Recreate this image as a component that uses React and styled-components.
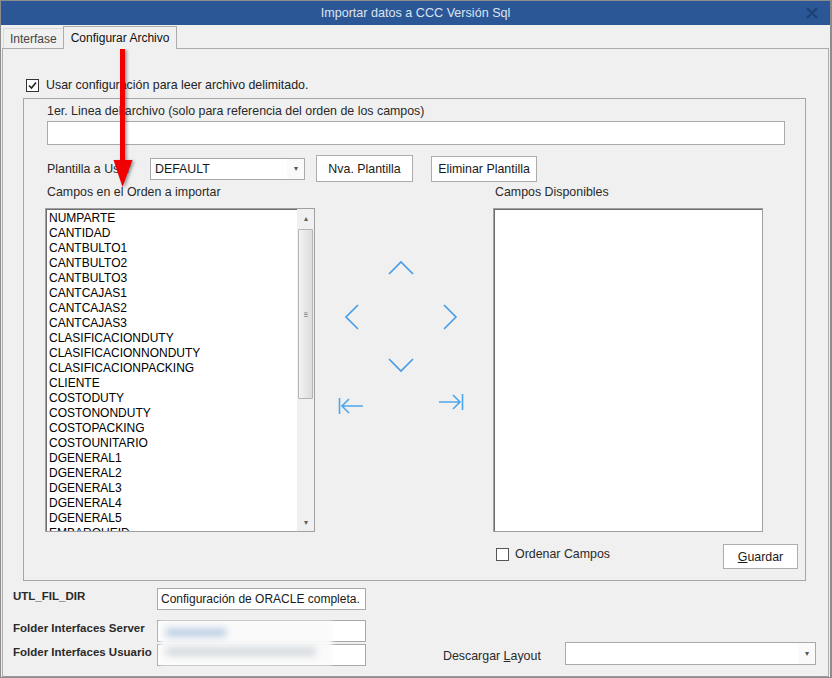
import React from 'react'
import styled, { createGlobalStyle } from 'styled-components'

const GlobalStyle = createGlobalStyle`
  body {
    margin: 0;
    font-family: "Liberation Sans", Arial, sans-serif;
    font-size: 12.4px;
    color: #1e1e1e;
    background: #f0f0f0;
  }
  * { box-sizing: border-box; }
`

const campos = [
  'NUMPARTE', 'CANTIDAD', 'CANTBULTO1', 'CANTBULTO2', 'CANTBULTO3', 'CANTCAJAS1',
  'CANTCAJAS2', 'CANTCAJAS3', 'CLASIFICACIONDUTY', 'CLASIFICACIONNONDUTY',
  'CLASIFICACIONPACKING', 'CLIENTE', 'COSTODUTY', 'COSTONONDUTY', 'COSTOPACKING',
  'COSTOUNITARIO', 'DGENERAL1', 'DGENERAL2', 'DGENERAL3', 'DGENERAL4', 'DGENERAL5',
  'EMBARQUEID'
]

function App() {
  return (
    <>
      <GlobalStyle />
      <Window>
        <TitleBar>
          <span />
          <TitleText>Importar datos a CCC Versión Sql</TitleText>
          <CloseBtn>
            <svg width="12" height="12" viewBox="0 0 12 12">
              <path d="M1 1 L11 11 M11 1 L1 11" stroke="#1d4274" strokeWidth="2.2" />
            </svg>
          </CloseBtn>
        </TitleBar>

        <TabStrip>
          <Tab>Interfase</Tab>
          <Tab $active>Configurar Archivo</Tab>
        </TabStrip>

        <Panel>
          <CheckRow>
            <CheckBox $checked>
              <svg width="11" height="11" viewBox="0 0 11 11">
                <path d="M2 5.5 L4.5 8 L9 2.5" stroke="#222" strokeWidth="1.6" fill="none" />
              </svg>
            </CheckBox>
            <span>Usar configuración para leer archivo delimitado.</span>
          </CheckRow>

          <GroupBox>
            <FieldLabel>1er. Linea del archivo (solo para referencia del orden de los campos)</FieldLabel>
            <TextInput $width={738} $height={24} $top={3} $left={2} />

            <TemplateRow>
              <RowLabel>Plantilla a Usar</RowLabel>
              <Select $width={155} $height={22}>
                <span>DEFAULT</span>
                <SelectArrow>▾</SelectArrow>
              </Select>
              <Button $width={97} $height={27} $gap={11}>Nva. Plantilla</Button>
              <Button $width={106} $height={26} $gap={18}>Eliminar Plantilla</Button>
            </TemplateRow>

            <Columns>
              <FieldLabel>Campos en el Orden a importar</FieldLabel>
              <span />
              <FieldLabel>Campos Disponibles</FieldLabel>
            </Columns>

            <ListsArea>
              <ListBox>
                <ListItems>
                  {campos.map((c) => <ListItem key={c}>{c}</ListItem>)}
                </ListItems>
                <ScrollBar>
                  <ScrollBtn>▴</ScrollBtn>
                  <Thumb><Grip>≡</Grip></Thumb>
                  <ScrollSpace />
                  <ScrollBtn>▾</ScrollBtn>
                </ScrollBar>
              </ListBox>

              <ArrowPad>
                <PadCell $col={2} $row={1}>
                  <svg width="26" height="15" viewBox="0 0 26 15">
                    <path d="M1 14 L13 2 L25 14" stroke="#4a9de4" strokeWidth="1.7" fill="none" />
                  </svg>
                </PadCell>
                <PadCell $col={1} $row={2}>
                  <svg width="16" height="26" viewBox="0 0 16 26">
                    <path d="M15 1 L3 13 L15 25" stroke="#4a9de4" strokeWidth="1.7" fill="none" />
                  </svg>
                </PadCell>
                <PadCell $col={3} $row={2}>
                  <svg width="16" height="26" viewBox="0 0 16 26">
                    <path d="M1 1 L13 13 L1 25" stroke="#4a9de4" strokeWidth="1.7" fill="none" />
                  </svg>
                </PadCell>
                <PadCell $col={2} $row={3}>
                  <svg width="26" height="15" viewBox="0 0 26 15">
                    <path d="M1 1 L13 13 L25 1" stroke="#4a9de4" strokeWidth="1.7" fill="none" />
                  </svg>
                </PadCell>
                <PadCell $col={1} $row={4}>
                  <svg width="26" height="18" viewBox="0 0 26 18">
                    <path d="M1.5 1 L1.5 17 M4 9 L25 9 M11 2 L4 9 L11 16" stroke="#4fa6ea" strokeWidth="1.6" fill="none" />
                  </svg>
                </PadCell>
                <PadCell $col={3} $row={4} $lift={4}>
                  <svg width="26" height="18" viewBox="0 0 26 18">
                    <path d="M24.5 1 L24.5 17 M1 9 L22 9 M15 2 L22 9 L15 16" stroke="#4fa6ea" strokeWidth="1.6" fill="none" />
                  </svg>
                </PadCell>
              </ArrowPad>

              <ListBox />
            </ListsArea>

            <GroupFooter>
              <CheckLabel>
                <CheckBox />
                <span>Ordenar Campos</span>
              </CheckLabel>
              <Button $width={75} $height={25}><u>G</u>uardar</Button>
            </GroupFooter>
          </GroupBox>

          <BottomArea>
            <PathGrid>
              <BoldLabel>UTL_FIL_DIR</BoldLabel>
              <TextInput $width={209} $height={22}>Configuración de ORACLE completa.</TextInput>
              <BoldLabel $top={10}>Folder Interfaces Server</BoldLabel>
              <TextInput $width={209} $height={22} $top={10} />
              <BoldLabel $top={2}>Folder Interfaces Usuario</BoldLabel>
              <TextInput $width={209} $height={22} $top={2} />
              <BlurPatch>
                <BlurLine $w={60} $c="#8fb0d4" />
                <BlurLine $w={150} $c="#b9c3cc" />
              </BlurPatch>
            </PathGrid>

            <LayoutPicker>
              <PickerLabel>Descargar <u>L</u>ayout</PickerLabel>
              <Select $width={251} $height={23}>
                <span />
                <SelectArrow>▾</SelectArrow>
              </Select>
            </LayoutPicker>
          </BottomArea>

          <RedArrow>
            <svg width="22" height="140" viewBox="0 0 22 140">
              <rect x="8" y="0" width="5" height="116" fill="#f00000" />
              <path d="M1.5 111 L20.5 111 L10.5 138 Z" fill="#f00000" />
            </svg>
          </RedArrow>
        </Panel>
      </Window>
    </>
  )
}

const Window = styled.div`
  width: 832px;
  height: 678px;
  display: flex;
  flex-direction: column;
  background: #f0f0f0;
  border: 1px solid #8c8c8c;
  border-right-width: 2px;
  border-bottom-width: 1px;
`

const TitleBar = styled.div`
  height: 24px;
  flex: none;
  display: grid;
  grid-template-columns: 1fr auto 1fr;
  align-items: center;
  background: #2b5797;
`

const TitleText = styled.div`
  color: #dbe4f0;
  font-size: 12.6px;
`

const CloseBtn = styled.div`
  justify-self: end;
  width: 30px;
  display: flex;
  justify-content: center;
  padding-right: 6px;
`

const TabStrip = styled.div`
  height: 23px;
  flex: none;
  display: flex;
  align-items: flex-end;
  padding-left: 2px;
  font-size: 12px;
`

const Tab = styled.div`
  height: ${(p) => (p.$active ? '23px' : '20px')};
  margin-bottom: ${(p) => (p.$active ? '-1px' : '0')};
  padding: 0 ${(p) => (p.$active ? '7px' : '6px')};
  display: flex;
  align-items: center;
  color: ${(p) => (p.$active ? '#111' : '#444')};
  background: #f0f0f0;
  border: 1px solid ${(p) => (p.$active ? '#acacac' : '#d9d9d9')};
  border-bottom: ${(p) => (p.$active ? 'none' : '0')};
  border-right: ${(p) => (p.$active ? '1px solid #acacac' : 'none')};
  position: relative;
  z-index: 1;
`

const Panel = styled.div`
  flex: 1;
  position: relative;
  margin: 0 1px;
  border: 1px solid #acacac;
  border-bottom: 1px solid #9a9a9a;
  padding-left: 10px;
`

const CheckRow = styled.label`
  display: flex;
  align-items: center;
  gap: 7px;
  margin-top: 29px;
  margin-left: 13px;
  height: 14px;
  color: #222;
`

const CheckBox = styled.span`
  width: 13px;
  height: 13px;
  flex: none;
  display: flex;
  align-items: center;
  justify-content: center;
  background: #fff;
  border: 1px solid ${(p) => (p.$checked ? '#333' : '#555')};
`

const GroupBox = styled.div`
  margin-top: 6px;
  margin-left: 10px;
  width: 783px;
  height: 483px;
  border: 1px solid #a6a6a6;
  padding: 5px 7px 0 21px;
  display: flex;
  flex-direction: column;
`

const FieldLabel = styled.div`
  line-height: 14px;
  padding-left: 2px;
  color: #2a2a2a;
  white-space: nowrap;
`

const TextInput = styled.div`
  width: ${(p) => p.$width}px;
  height: ${(p) => p.$height}px;
  margin-top: ${(p) => p.$top || 0}px;
  margin-left: ${(p) => p.$left || 0}px;
  background: #fff;
  border: 1px solid #a9a9a9;
  padding: 3px 3px 0;
  line-height: 14px;
  font-size: 12px;
  color: #1a1a1a;
  white-space: nowrap;
  overflow: hidden;
`

const TemplateRow = styled.div`
  display: flex;
  align-items: center;
  margin-top: 10px;
  height: 27px;
  padding-left: 2px;
`

const RowLabel = styled.div`
  width: 103px;
  color: #2a2a2a;
  white-space: nowrap;
`

const PickerLabel = styled.div`
  width: 122px;
  margin-top: 4px;
  color: #2a2a2a;
  white-space: nowrap;
`

const Select = styled.div`
  width: ${(p) => p.$width}px;
  height: ${(p) => p.$height}px;
  display: flex;
  align-items: center;
  justify-content: space-between;
  background: #fff;
  border: 1px solid #a9a9a9;
  padding-left: 4px;
  color: #1a1a1a;
`

const SelectArrow = styled.span`
  width: 17px;
  height: 100%;
  display: flex;
  align-items: center;
  justify-content: center;
  font-size: 8px;
  color: #555;
  background: #fafafa;
`

const Button = styled.div`
  width: ${(p) => p.$width}px;
  height: ${(p) => p.$height}px;
  margin-left: ${(p) => p.$gap || 0}px;
  display: flex;
  align-items: center;
  justify-content: center;
  background: #fff;
  border: 1px solid #adadad;
  color: #1a1a1a;
  white-space: nowrap;
`

const Columns = styled.div`
  display: grid;
  grid-template-columns: 270px 178px 270px;
  margin-top: 3px;
`

const ListsArea = styled.div`
  display: grid;
  grid-template-columns: 270px 178px 270px;
  margin-top: 9px;
  height: 324px;
`

const ListBox = styled.div`
  display: flex;
  background: #fff;
  border: 1px solid #a0a0a0;
  box-shadow: inset 1px 1px 0 #6e6e6e;
  overflow: hidden;
`

const ListItems = styled.div`
  flex: 1;
  padding: 2px 0 0 3px;
  overflow: hidden;
  font-size: 12px;
`

const ListItem = styled.div`
  line-height: 15px;
  color: #000;
  white-space: nowrap;
`

const ScrollBar = styled.div`
  width: 17px;
  flex: none;
  display: flex;
  flex-direction: column;
  background: #f0f0f0;
  padding-top: 1px;
`

const ScrollBtn = styled.div`
  height: 17px;
  display: flex;
  align-items: center;
  justify-content: center;
  font-size: 8px;
  color: #606060;
`

const Thumb = styled.div`
  height: 170px;
  margin: 2px 1px 0;
  background: linear-gradient(to right, #f3f3f3, #dcdcdc);
  border: 1px solid #b4b4b4;
  border-radius: 1px;
  display: flex;
  align-items: center;
  justify-content: center;
`

const Grip = styled.span`
  font-size: 10px;
  color: #777;
  transform: scaleX(0.7);
`

const ScrollSpace = styled.div`
  flex: 1;
`

const ArrowPad = styled.div`
  display: grid;
  grid-template-columns: repeat(3, 50px);
  grid-template-rows: 49px 49px 49px 32px;
  padding: 35px 0 0 11px;
  align-content: start;
`

const PadCell = styled.div`
  grid-column: ${(p) => p.$col};
  grid-row: ${(p) => p.$row};
  display: flex;
  align-items: center;
  justify-content: center;
  margin-bottom: ${(p) => (p.$lift || 0) * 2}px;
  svg { display: block; }
`

const GroupFooter = styled.div`
  display: flex;
  align-items: flex-start;
  justify-content: space-between;
  margin-top: 12px;
  padding-left: 451px;
`

const CheckLabel = styled.label`
  display: flex;
  align-items: center;
  gap: 6px;
  margin-top: 3px;
  color: #2a2a2a;
`

const BottomArea = styled.div`
  display: flex;
  align-items: flex-end;
  margin-top: 7px;
`

const PathGrid = styled.div`
  position: relative;
  display: grid;
  grid-template-columns: 144px 209px;
  align-items: start;
`

const BoldLabel = styled.div`
  font-weight: bold;
  font-size: 11.5px;
  line-height: 14px;
  padding-top: 1px;
  margin-top: ${(p) => p.$top || 0}px;
  color: #2a2a2a;
  white-space: nowrap;
`

const BlurPatch = styled.div`
  position: absolute;
  left: 147px;
  top: 33px;
  width: 172px;
  height: 44px;
  background: rgba(250, 250, 250, 0.95);
  filter: blur(2px);
  display: flex;
  flex-direction: column;
  gap: 12px;
  padding: 8px 0 0 6px;
`

const BlurLine = styled.div`
  width: ${(p) => p.$w}px;
  height: 7px;
  background: ${(p) => p.$c};
  filter: blur(3px);
  opacity: 0.7;
`

const LayoutPicker = styled.div`
  display: flex;
  align-items: center;
  margin-left: 77px;
  margin-bottom: 1px;
`

const RedArrow = styled.div`
  position: absolute;
  left: 109px;
  top: 0;
  pointer-events: none;
  filter: drop-shadow(2px 1px 1.5px rgba(0, 0, 0, 0.35));
  svg { display: block; }
`

export default App
